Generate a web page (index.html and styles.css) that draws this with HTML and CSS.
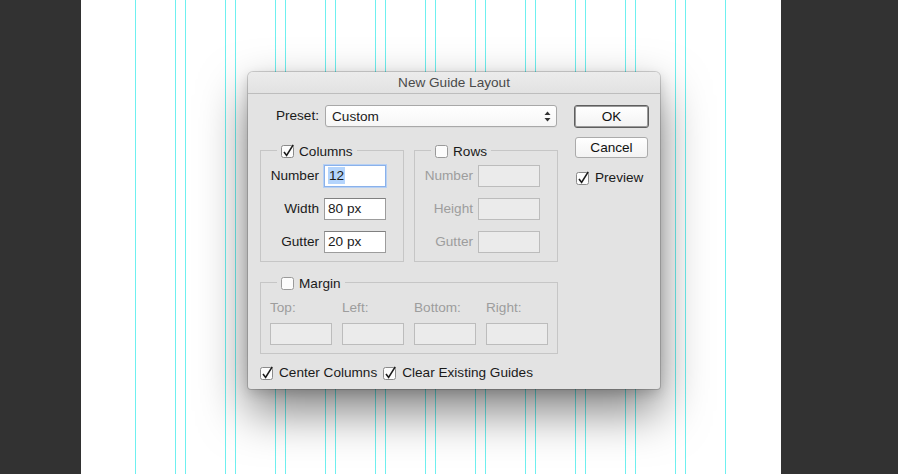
FILE: index.html
```html
<!DOCTYPE html>
<html lang="en">
<head>
    <meta charset="utf-8"/>
    <title>New Guide Layout</title>
    <link rel="stylesheet" href="styles.css">
</head>
<body>
    <div class="app">
        <div class="side"></div>
        <div class="canvas">
            <div class="guides"></div>
            <div class="dialog">
                <div class="titlebar">New Guide Layout</div>
                <div class="dialog-body">
                    <div class="main">
                        <div class="preset-row">
                            <span class="label">Preset:</span>
                            <div class="select">
                                <span>Custom</span>
                                <svg class="arrows" width="7" height="11" viewBox="0 0 7 11">
                                    <path d="M0.5 4 L3.5 0.5 L6.5 4 Z" fill="#333"/>
                                    <path d="M0.5 7 L3.5 10.5 L6.5 7 Z" fill="#333"/>
                                </svg>
                            </div>
                        </div>

                        <div class="groups">
                            <div class="group">
                                <div class="legend">
                                    <svg class="check" width="14" height="15" viewBox="0 0 14 15"><rect x="0.5" y="1.5" width="12" height="12" rx="2" fill="#fcfcfc" stroke="#8a8a8a"/><path d="M3 8 L5.6 11.4 L12.2 0.8" fill="none" stroke="#1a1a1a" stroke-width="1.6"/></svg>
                                    <span>Columns</span>
                                </div>
                                <div class="field-row first">
                                    <span class="label">Number</span>
                                    <span class="input focus"><span class="sel">12</span></span>
                                </div>
                                <div class="field-row">
                                    <span class="label">Width</span>
                                    <span class="input">80 px</span>
                                </div>
                                <div class="field-row">
                                    <span class="label">Gutter</span>
                                    <span class="input">20 px</span>
                                </div>
                            </div>

                            <div class="group">
                                <div class="legend">
                                    <svg class="check" width="14" height="15" viewBox="0 0 14 15"><rect x="0.5" y="1.5" width="12" height="12" rx="2" fill="#fcfcfc" stroke="#9a9a9a"/></svg>
                                    <span>Rows</span>
                                </div>
                                <div class="field-row first disabled">
                                    <span class="label">Number</span>
                                    <span class="input"></span>
                                </div>
                                <div class="field-row disabled">
                                    <span class="label">Height</span>
                                    <span class="input"></span>
                                </div>
                                <div class="field-row disabled">
                                    <span class="label">Gutter</span>
                                    <span class="input"></span>
                                </div>
                            </div>
                        </div>

                        <div class="group margin-group">
                            <div class="legend">
                                <svg class="check" width="14" height="15" viewBox="0 0 14 15"><rect x="0.5" y="1.5" width="12" height="12" rx="2" fill="#fcfcfc" stroke="#9a9a9a"/></svg>
                                <span>Margin</span>
                            </div>
                            <div class="margin-grid disabled">
                                <span class="label">Top:</span>
                                <span class="label">Left:</span>
                                <span class="label">Bottom:</span>
                                <span class="label">Right:</span>
                                <span class="input"></span>
                                <span class="input"></span>
                                <span class="input"></span>
                                <span class="input"></span>
                            </div>
                        </div>

                        <div class="options">
                            <label class="option">
                                <svg class="check" width="14" height="15" viewBox="0 0 14 15"><rect x="0.5" y="1.5" width="12" height="12" rx="2" fill="#fcfcfc" stroke="#8a8a8a"/><path d="M3 8 L5.6 11.4 L12.2 0.8" fill="none" stroke="#1a1a1a" stroke-width="1.6"/></svg>
                                Center Columns
                            </label>
                            <label class="option">
                                <svg class="check" width="14" height="15" viewBox="0 0 14 15"><rect x="0.5" y="1.5" width="12" height="12" rx="2" fill="#fcfcfc" stroke="#8a8a8a"/><path d="M3 8 L5.6 11.4 L12.2 0.8" fill="none" stroke="#1a1a1a" stroke-width="1.6"/></svg>
                                Clear Existing Guides
                            </label>
                        </div>
                    </div>

                    <div class="actions">
                        <button type="button" class="btn default">OK</button>
                        <button type="button" class="btn">Cancel</button>
                        <label class="option preview">
                            <svg class="check" width="14" height="15" viewBox="0 0 14 15"><rect x="0.5" y="1.5" width="12" height="12" rx="2" fill="#fcfcfc" stroke="#8a8a8a"/><path d="M3 8 L5.6 11.4 L12.2 0.8" fill="none" stroke="#1a1a1a" stroke-width="1.6"/></svg>
                            Preview
                        </label>
                    </div>
                </div>
            </div>
        </div>
        <div class="side"></div>
    </div>
</body>
</html>
```

FILE: styles.css
```css
body {
    margin: 0;
    font-family: "Liberation Sans", Arial, sans-serif;
    font-size: 13.6px;
    color: #1a1a1a;
    background-color: #323232;
}
.app {
    display: flex;
    height: 474px;
    overflow: hidden;
}
.side {
    width: 81px;
    background-color: #323232;
}
.side:last-child {
    flex: 1;
}
.canvas {
    position: relative;
    width: 700px;
    background-color: #fff;
}
.guides {
    margin-left: 54px;
    width: 591px;
    height: 100%;
    background: repeating-linear-gradient(to right,
        #6ef0f0 0, #6ef0f0 1px,
        transparent 1px, transparent 40px,
        #6ef0f0 40px, #6ef0f0 41px,
        transparent 41px, transparent 50px);
}

/* dialog window */
.dialog {
    position: absolute;
    left: 167px;
    top: 72px;
    width: 412px;
    height: 317px;
    background-color: #e3e3e3;
    border-radius: 5px 5px 3px 3px;
    box-shadow: 0 0 0 1px rgba(0,0,0,0.16), 0 22px 48px rgba(0,0,0,0.5), 0 4px 12px rgba(0,0,0,0.15);
}
.titlebar {
    height: 21px;
    line-height: 22px;
    text-align: center;
    color: #4a4a4a;
    background: linear-gradient(#ececec, #e2e2e2);
    border-bottom: 1px solid #bdbdbd;
    border-radius: 5px 5px 0 0;
}
.dialog-body {
    display: flex;
    padding: 11px 0 0 12px;
}
.main {
    width: 298px;
}
.label {
    line-height: 16px;
}
.preset-row {
    display: flex;
    align-items: center;
    gap: 6px;
    height: 22px;
}
.preset-row .label {
    width: 59px;
    text-align: right;
}
.select {
    display: flex;
    align-items: center;
    justify-content: space-between;
    box-sizing: border-box;
    width: 232px;
    height: 22px;
    padding: 0 5px 0 6px;
    border: 1px solid #a8a8a8;
    border-radius: 3px;
    background: linear-gradient(#ffffff, #f6f6f6);
    box-shadow: 0 1px 0 rgba(0,0,0,0.04);
}

/* groups */
.groups {
    display: flex;
    gap: 10px;
    margin-top: 23px;
}
.group {
    box-sizing: border-box;
    width: 144px;
    border: 1px solid #c6c6c6;
    padding-bottom: 8px;
}
.legend {
    display: flex;
    align-items: center;
    gap: 4px;
    width: max-content;
    height: 16px;
    margin: -8px 0 0 16px;
    padding: 0 4px;
    background-color: #e3e3e3;
}
.check {
    display: block;
    overflow: visible;
    flex: none;
}
.field-row {
    display: flex;
    align-items: center;
    gap: 5px;
    margin-top: 11px;
}
.field-row.first {
    margin-top: 6px;
}
.field-row .label {
    width: 58px;
    text-align: right;
}
.input {
    display: block;
    box-sizing: border-box;
    width: 62px;
    height: 22px;
    padding: 0 3px;
    line-height: 20px;
    background-color: #fff;
    border: 1px solid #9c9c9c;
    border-top-color: #808080;
}
.input.focus {
    border: 1px solid #8ab1ea;
    box-shadow: 0 0 0 1px #b6d0f4;
}
.sel {
    background-color: #b4d4fc;
    padding: 1px 1px;
}
.disabled .label {
    color: #9d9d9d;
}
.disabled .input {
    background-color: #ebebeb;
    border-color: #bcbcbc;
}

/* margin */
.margin-group {
    width: 298px;
    margin-top: 20px;
}
.margin-grid {
    display: grid;
    grid-template-columns: repeat(4, 62px);
    column-gap: 10px;
    row-gap: 7px;
    padding-left: 9px;
    margin-top: 9px;
}

/* checkboxes */
.options {
    display: flex;
    gap: 6px;
    margin-top: 11px;
}
.option {
    display: flex;
    align-items: center;
    gap: 5px;
    line-height: 16px;
    cursor: default;
}

/* buttons */
.actions {
    display: flex;
    flex-direction: column;
    align-items: flex-start;
    margin-left: 16px;
    width: 76px;
}
.btn {
    box-sizing: border-box;
    font-family: inherit;
    font-size: 13.6px;
    color: #111;
    border-radius: 3px;
    padding: 0;
    background: linear-gradient(#ffffff, #f3f3f3);
}
.btn.default {
    width: 75px;
    height: 23px;
    border: 1px solid #5e5e5e;
    box-shadow: inset 0 0 0 1px #9a9a9a;
}
.btn:not(.default) {
    width: 73px;
    height: 21px;
    margin: 9px 0 0 1px;
    border: 1px solid #ababab;
}
.preview {
    margin: 12px 0 0 2px;
}
```
